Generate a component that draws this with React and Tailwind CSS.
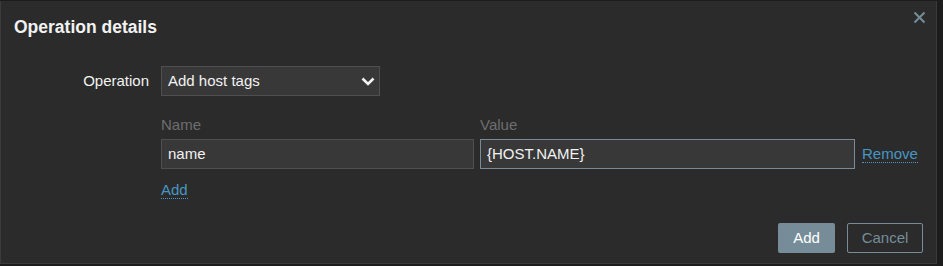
const ChevronDown = () => (
    <svg width="14" height="9" viewBox="0 0 14 9" className="shrink-0">
        <polyline points="1.5,1.5 7,7 12.5,1.5" fill="none" stroke="#f2f2f2" strokeWidth="2.6" />
    </svg>
);

const CloseIcon = () => (
    <svg width="13" height="13" viewBox="0 0 13 13">
        <path d="M1.5 1.5 L11.5 11.5 M11.5 1.5 L1.5 11.5" stroke="#768d99" strokeWidth="2" fill="none" />
    </svg>
);

const linkCls = 'text-[#4796c4] border-b border-dotted border-[#4796c4] leading-[17px] cursor-pointer';

export default function App() {
    return (
        <div className="w-[943px] h-[266px] bg-[#1c1c1c] pt-[1px] font-['Liberation_Sans',Arial,sans-serif] text-[15px] text-[#f2f2f2]">
            <div className="relative w-[937px] h-[263px] bg-[#2b2b2b] border-x border-b border-[#3a3a3a] flex flex-col">
                <button className="absolute right-[10px] top-[10px] p-0">
                    <CloseIcon />
                </button>

                {/* header */}
                <div className="pl-[13px] pt-[15px] h-[65px]">
                    <h4 className="text-[17.5px] font-bold leading-[22px]">Operation details</h4>
                </div>

                {/* form */}
                <div className="flex items-center">
                    <label className="w-[148px] text-right pr-0">Operation</label>
                    <div className="ml-[12px] w-[219px] h-[30px] bg-[#383838] border border-[#4f4f4f] flex items-center justify-between pl-[6px] pr-[4px]">
                        <span>Add host tags</span>
                        <ChevronDown />
                    </div>
                </div>

                <div className="ml-[160px] mt-[19px] flex flex-col">
                    <div className="flex text-[#6e6e6e] leading-[20px]">
                        <div className="w-[319px]">Name</div>
                        <div>Value</div>
                    </div>
                    <div className="flex items-center mt-[4px]">
                        <div className="w-[313px] h-[30px] bg-[#383838] border border-[#4f4f4f] flex items-center px-[6px]">name</div>
                        <div className="ml-[6px] w-[375px] h-[30px] bg-[#383838] border border-[#768d99] flex items-center px-[6px]">{'{HOST.NAME}'}</div>
                        <span className={`ml-[7px] ${linkCls}`}>Remove</span>
                    </div>
                    <div className="mt-[12px] flex">
                        <span className={linkCls}>Add</span>
                    </div>
                </div>

                {/* footer */}
                <div className="mt-auto mb-[10px] mr-[13px] flex justify-end gap-[12px]">
                    <button className="w-[57px] h-[30px] bg-[#768d99] rounded-[2px] text-white text-[15px]">Add</button>
                    <button className="w-[76px] h-[30px] border border-[#768d99] rounded-[2px] text-[#768d99] text-[15px]">Cancel</button>
                </div>
            </div>
        </div>
    );
}
